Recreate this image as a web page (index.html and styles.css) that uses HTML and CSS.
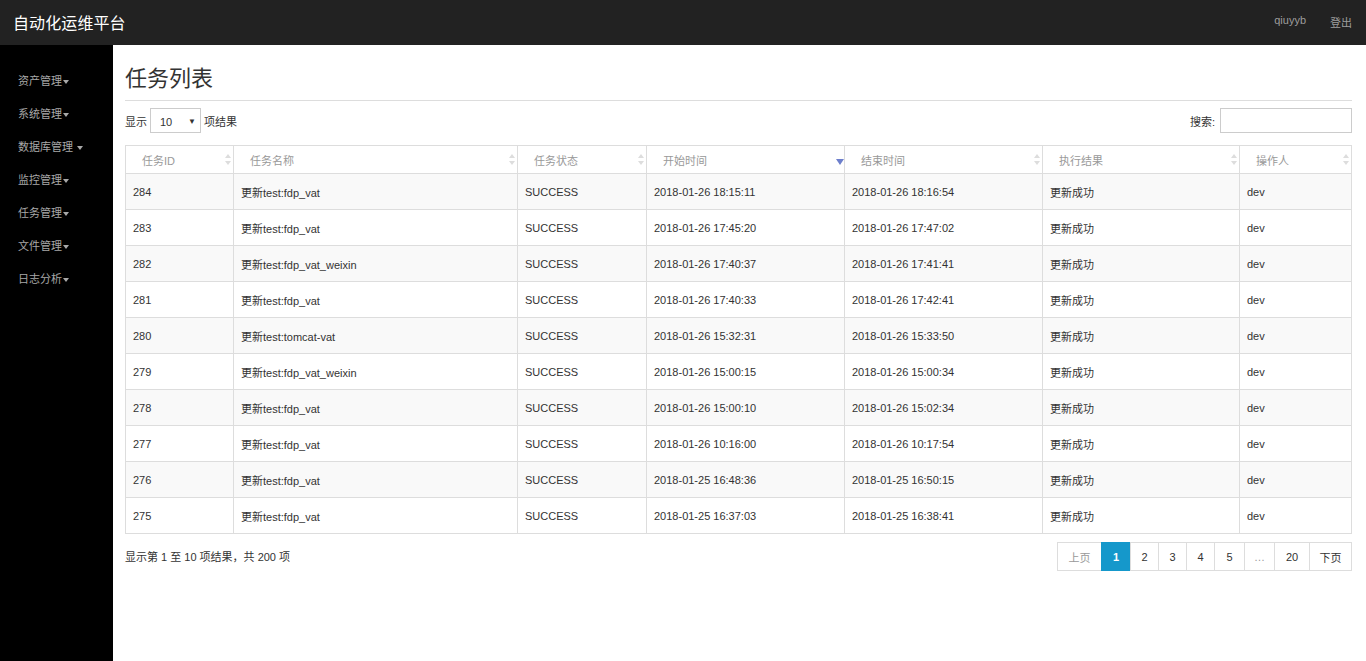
FILE: index.html
```html
<!DOCTYPE html>
<html lang="zh">
<head>
<meta charset="utf-8">
<title>任务列表</title>
<link rel="stylesheet" href="styles.css">
</head>
<body>
<header class="topbar">
  <div class="brand">自动化运维平台</div>
  <nav class="user-nav">
    <span class="user">qiuyyb</span>
    <span class="logout">登出</span>
  </nav>
</header>
<div class="layout">
  <aside class="sidebar">
    <ul class="menu">
      <li>资产管理<span class="caret"></span></li>
      <li>系统管理<span class="caret"></span></li>
      <li>数据库管理 <span class="caret"></span></li>
      <li>监控管理<span class="caret"></span></li>
      <li>任务管理<span class="caret"></span></li>
      <li>文件管理<span class="caret"></span></li>
      <li>日志分析<span class="caret"></span></li>
    </ul>
  </aside>
  <main class="content">
    <div class="page-header"><h1>任务列表</h1></div>
    <div class="controls">
      <div class="length">显示 <span class="select"><span>10</span><span class="sel-caret">▼</span></span> 项结果</div>
      <div class="search">搜索: <span class="search-input"></span></div>
    </div>
    <table class="grid">
      <colgroup>
        <col style="width:108px"><col style="width:284px"><col style="width:129px"><col style="width:198px"><col style="width:198px"><col style="width:197px"><col style="width:112px">
      </colgroup>
      <thead>
        <tr>
          <th><span>任务ID</span><i class="sort"></i></th>
          <th><span>任务名称</span><i class="sort"></i></th>
          <th><span>任务状态</span><i class="sort"></i></th>
          <th><span>开始时间</span><i class="sort-desc"></i></th>
          <th><span>结束时间</span><i class="sort"></i></th>
          <th><span>执行结果</span><i class="sort"></i></th>
          <th><span>操作人</span><i class="sort"></i></th>
        </tr>
      </thead>
      <tbody>
        <tr><td>284</td><td>更新test:fdp_vat</td><td>SUCCESS</td><td>2018-01-26 18:15:11</td><td>2018-01-26 18:16:54</td><td>更新成功</td><td>dev</td></tr>
        <tr><td>283</td><td>更新test:fdp_vat</td><td>SUCCESS</td><td>2018-01-26 17:45:20</td><td>2018-01-26 17:47:02</td><td>更新成功</td><td>dev</td></tr>
        <tr><td>282</td><td>更新test:fdp_vat_weixin</td><td>SUCCESS</td><td>2018-01-26 17:40:37</td><td>2018-01-26 17:41:41</td><td>更新成功</td><td>dev</td></tr>
        <tr><td>281</td><td>更新test:fdp_vat</td><td>SUCCESS</td><td>2018-01-26 17:40:33</td><td>2018-01-26 17:42:41</td><td>更新成功</td><td>dev</td></tr>
        <tr><td>280</td><td>更新test:tomcat-vat</td><td>SUCCESS</td><td>2018-01-26 15:32:31</td><td>2018-01-26 15:33:50</td><td>更新成功</td><td>dev</td></tr>
        <tr><td>279</td><td>更新test:fdp_vat_weixin</td><td>SUCCESS</td><td>2018-01-26 15:00:15</td><td>2018-01-26 15:00:34</td><td>更新成功</td><td>dev</td></tr>
        <tr><td>278</td><td>更新test:fdp_vat</td><td>SUCCESS</td><td>2018-01-26 15:00:10</td><td>2018-01-26 15:02:34</td><td>更新成功</td><td>dev</td></tr>
        <tr><td>277</td><td>更新test:fdp_vat</td><td>SUCCESS</td><td>2018-01-26 10:16:00</td><td>2018-01-26 10:17:54</td><td>更新成功</td><td>dev</td></tr>
        <tr><td>276</td><td>更新test:fdp_vat</td><td>SUCCESS</td><td>2018-01-25 16:48:36</td><td>2018-01-25 16:50:15</td><td>更新成功</td><td>dev</td></tr>
        <tr><td>275</td><td>更新test:fdp_vat</td><td>SUCCESS</td><td>2018-01-25 16:37:03</td><td>2018-01-25 16:38:41</td><td>更新成功</td><td>dev</td></tr>
      </tbody>
    </table>
    <div class="footer-row">
      <div class="info">显示第 1 至 10 项结果，共 200 项</div>
      <ul class="pager">
        <li class="disabled w-prev">上页</li>
        <li class="active w-one">1</li>
        <li class="w-num">2</li>
        <li class="w-num">3</li>
        <li class="w-num">4</li>
        <li class="w-5">5</li>
        <li class="disabled w-ell">…</li>
        <li class="w-20">20</li>
        <li class="w-next">下页</li>
      </ul>
    </div>
  </main>
</div>
</body>
</html>
```
FILE: styles.css
```css
* { box-sizing: border-box; }
html, body { margin: 0; padding: 0; }
body {
  font-family: "Liberation Sans", "Noto Sans CJK SC", Arial, sans-serif;
  font-size: 11px;
  color: #333;
  background: #fff;
  height: 661px;
  overflow: hidden;
}
.topbar {
  height: 45px;
  background: #222;
  display: flex;
  align-items: center;
  justify-content: space-between;
  padding: 0 14px 2px 13px;
}
.brand {
  color: #fff;
  font-size: 16px;
  font-family: "Noto Sans CJK SC", sans-serif;
  letter-spacing: 0.1px;
}
.user-nav { display: flex; gap: 24px; color: #9d9d9d; font-size: 11px; }
.layout { display: flex; height: 616px; }
.sidebar {
  width: 113px;
  flex: none;
  background: #000;
}
.menu {
  list-style: none;
  margin: 0;
  padding: 28px 0 0 18px;
}
.menu li {
  color: #a8a8a8;
  font-size: 11px;
  height: 33px;
  line-height: 16px;
}
.caret {
  display: inline-block;
  width: 0; height: 0;
  border-left: 3px solid transparent;
  border-right: 3px solid transparent;
  border-top: 4px solid #a8a8a8;
  margin-left: 1px;
  vertical-align: middle;
}
.content {
  flex: 1;
  padding: 0 15px 0 12px;
}
.page-header {
  border-bottom: 1px solid #ddd;
  padding: 18px 0 10px;
}
.page-header h1 {
  margin: 0;
  font-size: 22px;
  font-weight: normal;
  line-height: 27px;
  color: #333;
  font-family: "Noto Sans CJK SC", sans-serif;
}
.controls {
  display: flex;
  justify-content: space-between;
  align-items: center;
  margin-top: 7px;
  height: 25px;
}
.length, .search { display: flex; align-items: center; gap: 3px; }
.select {
  display: inline-flex;
  align-items: center;
  justify-content: space-between;
  width: 51px;
  height: 25px;
  border: 1px solid #ccc;
  padding: 2px 4px 0 9px;
  font-size: 11px;
}
.sel-caret { font-size: 8px; color: #333; }
.search-input {
  display: inline-block;
  width: 132px;
  height: 25px;
  border: 1px solid #ccc;
  margin-left: 2px;
}
.grid {
  width: 100%;
  margin-top: 12px;
  border-collapse: collapse;
  table-layout: fixed;
}
.grid th, .grid td {
  border: 1px solid #ddd;
  text-align: left;
  white-space: nowrap;
}
.grid th {
  height: 28px;
  font-weight: normal;
  color: #999;
  padding: 0 8px 0 16px;
  position: relative;
}
.grid td {
  height: 36px;
  padding: 1px 7px 0;
  color: #333;
}
.grid tbody tr:nth-child(odd) td { background: #f9f9f9; }
.sort, .sort-desc { position: absolute; right: 8px; top: 50%; }
.sort::before, .sort::after {
  content: "";
  position: absolute;
  left: 0;
  border-left: 3px solid transparent;
  border-right: 3px solid transparent;
}
.sort::before { top: -6px; border-bottom: 4px solid #ddd; }
.sort::after { top: 1px; border-top: 4px solid #ddd; }
.sort-desc::after {
  content: "";
  position: absolute;
  left: 0;
  top: -1px;
  border-left: 4px solid transparent;
  border-right: 4px solid transparent;
  border-top: 6px solid #6d7fcc;
}
.footer-row {
  display: flex;
  justify-content: space-between;
  margin-top: 8px;
}
.info { padding-top: 6px; }
.pager {
  list-style: none;
  margin: 0;
  padding: 0;
  display: flex;
}
.pager li {
  height: 29px;
  border: 1px solid #ddd;
  margin-left: -1px;
  display: flex;
  align-items: center;
  justify-content: center;
  color: #333;
  background: #fff;
}
.pager li.disabled { color: #999; }
.pager li.active { background: #1598cb; color: #fff; border-color: #1598cb; font-weight: bold; }
.w-prev { width: 45px; }
.w-one { width: 30px; }
.w-num { width: 29px; }
.w-5 { width: 31px; }
.w-ell { width: 31px; }
.w-20 { width: 36px; }
.w-next { width: 43px; }
```
